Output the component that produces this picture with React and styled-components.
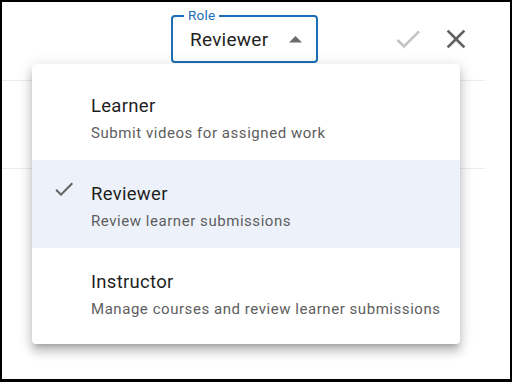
import React from "react";
import styled, { createGlobalStyle } from "styled-components";

const Global = createGlobalStyle`
  html, body { margin: 0; padding: 0; background: #fff; }
  body { font-family: Roboto, "Noto Sans", "Liberation Sans", sans-serif; }
  * { box-sizing: border-box; }
`;

const Page = styled.div`
  position: relative;
  width: 512px;
  height: 382px;
  border: 2px solid #000;
  border-bottom-width: 3px;
  background: #fff;
  overflow: hidden;
`;

const Table = styled.div`
  width: 483px;
  display: flex;
  flex-direction: column;
`;

const HeaderRow = styled.div`
  height: 79px;
  display: flex;
  justify-content: flex-end;
  align-items: flex-start;
  padding: 13px 5px 0 0;
  border-bottom: 1px solid #ebebeb;
`;

const BodyRow = styled.div`
  height: 88px;
  border-bottom: 1px solid #ebebeb;
`;

const Field = styled.div`
  position: relative;
  width: 147px;
  height: 48px;
  margin-right: 66px;
  border: 2px solid #1b6db4;
  border-radius: 4px;
  display: flex;
  align-items: center;
  justify-content: space-between;
  padding: 0 14px 0 17px;
`;

const FieldLabel = styled.span`
  position: absolute;
  left: 11px;
  top: -9px;
  padding: 0 4px;
  background: #fff;
  font-size: 13.5px;
  line-height: 14px;
  letter-spacing: 0.2px;
  color: #1b6db4;
`;

const FieldValue = styled.span`
  font-size: 19px;
  line-height: 24px;
  letter-spacing: 0.25px;
  color: #1f1f1f;
  padding-top: 2px;
`;

const IconButton = styled.button`
  width: 48px;
  height: 48px;
  padding: 8px;
  border: 0;
  background: transparent;
  display: flex;
  align-items: center;
  justify-content: center;
  color: ${(p) => p.$color};
  svg { display: block; }
`;

const Menu = styled.ul`
  position: absolute;
  left: 30px;
  top: 62px;
  width: 428px;
  margin: 0;
  padding: 8px 0;
  list-style: none;
  background: #fff;
  border-radius: 4px;
  box-shadow: 0px 5px 5px -3px rgba(0,0,0,0.2), 0px 8px 10px 1px rgba(0,0,0,0.14), 0px 3px 14px 2px rgba(0,0,0,0.12);
`;

const Item = styled.li`
  display: flex;
  height: 88px;
  padding: 21px 16px 0 20px;
  background: ${(p) => (p.$selected ? "#edf2fa" : "transparent")};
`;

const IconSlot = styled.div`
  width: 39px;
  flex: none;
  color: #616161;
  svg { display: block; margin-top: -4px; }
`;

const Texts = styled.div`
  display: flex;
  flex-direction: column;
  gap: 3px;
`;

const Title = styled.span`
  font-size: 18.5px;
  line-height: 27px;
  letter-spacing: 0.3px;
  color: #1f1f1f;
`;

const Sub = styled.span`
  font-size: 15px;
  line-height: 21px;
  letter-spacing: 0.55px;
  color: #5e5e5e;
`;

const CheckIcon = ({ size }) => (
  <svg width={size} height={size} viewBox="0 0 24 24" fill="currentColor">
    <path d="M9 16.17 4.83 12l-1.42 1.41L9 19 21 7l-1.41-1.41z" />
  </svg>
);

const CloseIcon = ({ size }) => (
  <svg width={size} height={size} viewBox="0 0 24 24" fill="currentColor">
    <path d="M19 6.41 17.59 5 12 10.59 6.41 5 5 6.41 10.59 12 5 17.59 6.41 19 12 13.41 17.59 19 19 17.59 13.41 12z" />
  </svg>
);

const ArrowUp = () => (
  <svg width="13" height="7" viewBox="0 0 13 7" fill="#6b6b6b">
    <polygon points="0,6.5 6.5,0 13,6.5" />
  </svg>
);

const roles = [
  { name: "Learner", desc: "Submit videos for assigned work" },
  { name: "Reviewer", desc: "Review learner submissions", selected: true },
  { name: "Instructor", desc: "Manage courses and review learner submissions" },
];

export default function App() {
  return (
    <>
      <Global />
      <Page>
        <Table>
          <HeaderRow>
            <Field>
              <FieldLabel>Role</FieldLabel>
              <FieldValue>Reviewer</FieldValue>
              <ArrowUp />
            </Field>
            <IconButton $color="#c4c4c4" aria-label="Save">
              <CheckIcon size={32} />
            </IconButton>
            <IconButton $color="#616161" aria-label="Cancel">
              <CloseIcon size={32} />
            </IconButton>
          </HeaderRow>
          <BodyRow />
        </Table>
        <Menu>
          {roles.map((r) => (
            <Item key={r.name} $selected={r.selected}>
              <IconSlot>{r.selected && <CheckIcon size={24} />}</IconSlot>
              <Texts>
                <Title>{r.name}</Title>
                <Sub>{r.desc}</Sub>
              </Texts>
            </Item>
          ))}
        </Menu>
      </Page>
    </>
  );
}
